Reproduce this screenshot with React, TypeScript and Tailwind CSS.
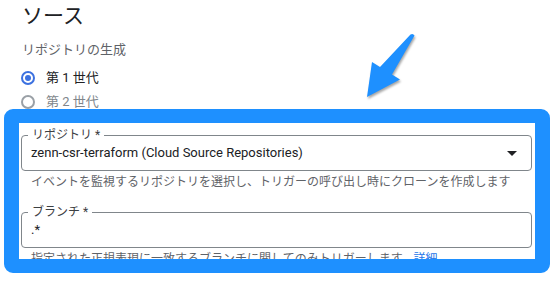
import React from "react";

const font = "font-['Roboto','Noto_Sans_CJK_JP',sans-serif]";

function Radio({ checked, label }: { checked: boolean; label: string }) {
  return (
    <div className="flex h-[24px] items-center gap-[11px] pl-[21px]">
      <span
        className={
          "flex h-[14px] w-[14px] items-center justify-center rounded-full border-2 " +
          (checked ? "border-[#3c71e0]" : "border-[#9aa0a6]")
        }
      >
        {checked && <span className="h-[6px] w-[6px] rounded-full bg-[#3c71e0]" />}
      </span>
      <span className={"text-[13px] " + (checked ? "text-[#202124]" : "text-[#80868b]")}>{label}</span>
    </div>
  );
}

function Field({ label, value, select }: { label: string; value: string; select?: boolean }) {
  return (
    <div className="relative flex h-[36px] items-center justify-between rounded-[4px] border border-[#80868b] pl-[9px] pr-[14px]">
      <span className="absolute -top-[9px] left-[6px] bg-white px-[4px] text-[12px] leading-[16px] text-[#3c4043]">
        {label}
      </span>
      <span className="text-[13px] text-[#202124]">{value}</span>
      {select && (
        <svg width="10" height="5" viewBox="0 0 10 5">
          <path d="M0 0h10L5 5z" fill="#202124" />
        </svg>
      )}
    </div>
  );
}

export default function App() {
  return (
    <div className={"relative h-[282px] w-[556px] overflow-hidden bg-white " + font}>
      <div className="h-[109px] overflow-hidden">
        <h1 className="pl-[22px] text-[21px] leading-[32px] text-[#202124]">ソース</h1>
        <p className="mt-2 pl-[22px] text-[13px] leading-[20px] text-[#5f6368]">リポジトリの生成</p>
        <div className="mt-[6px]">
          <Radio checked label="第 1 世代" />
          <Radio checked={false} label="第 2 世代" />
        </div>
      </div>

      <div className="ml-[4px] h-[164px] w-[546px] overflow-hidden rounded-[9px] border-x-[15px] border-y-[14px] border-[#1e90ff] bg-white">
        <div className="pl-[2px] pr-[3px] pt-[12px]">
          <Field label="リポジトリ *" value="zenn-csr-terraform (Cloud Source Repositories)" select />
          <p className="mt-[3px] pl-[10px] text-[12px] leading-[16px] text-[#5f6368]">
            イベントを監視するリポジトリを選択し、トリガーの呼び出し時にクローンを作成します
          </p>
          <div className="mt-[22px]">
            <Field label="ブランチ *" value=".*" />
          </div>
          <p className="mt-[3px] pl-[10px] text-[12px] leading-[16px] text-[#5f6368]">
            指定された正規表現に一致するブランチに関してのみトリガーします。
            <span className="text-[#1a73e8]">詳細</span>
          </p>
        </div>
      </div>

      <svg
        className="absolute left-[350px] top-[25px] drop-shadow-[1px_2px_1px_rgba(0,0,0,0.35)]"
        width="80"
        height="80"
        viewBox="350 25 80 80"
      >
        <path
          d="M367 97 L372 62 L380 67 L410.5 34.5 Q413 33 414.5 35.5 L392 74.5 L400 79.5 Z"
          fill="#1e90ff"
        />
      </svg>
    </div>
  );
}
